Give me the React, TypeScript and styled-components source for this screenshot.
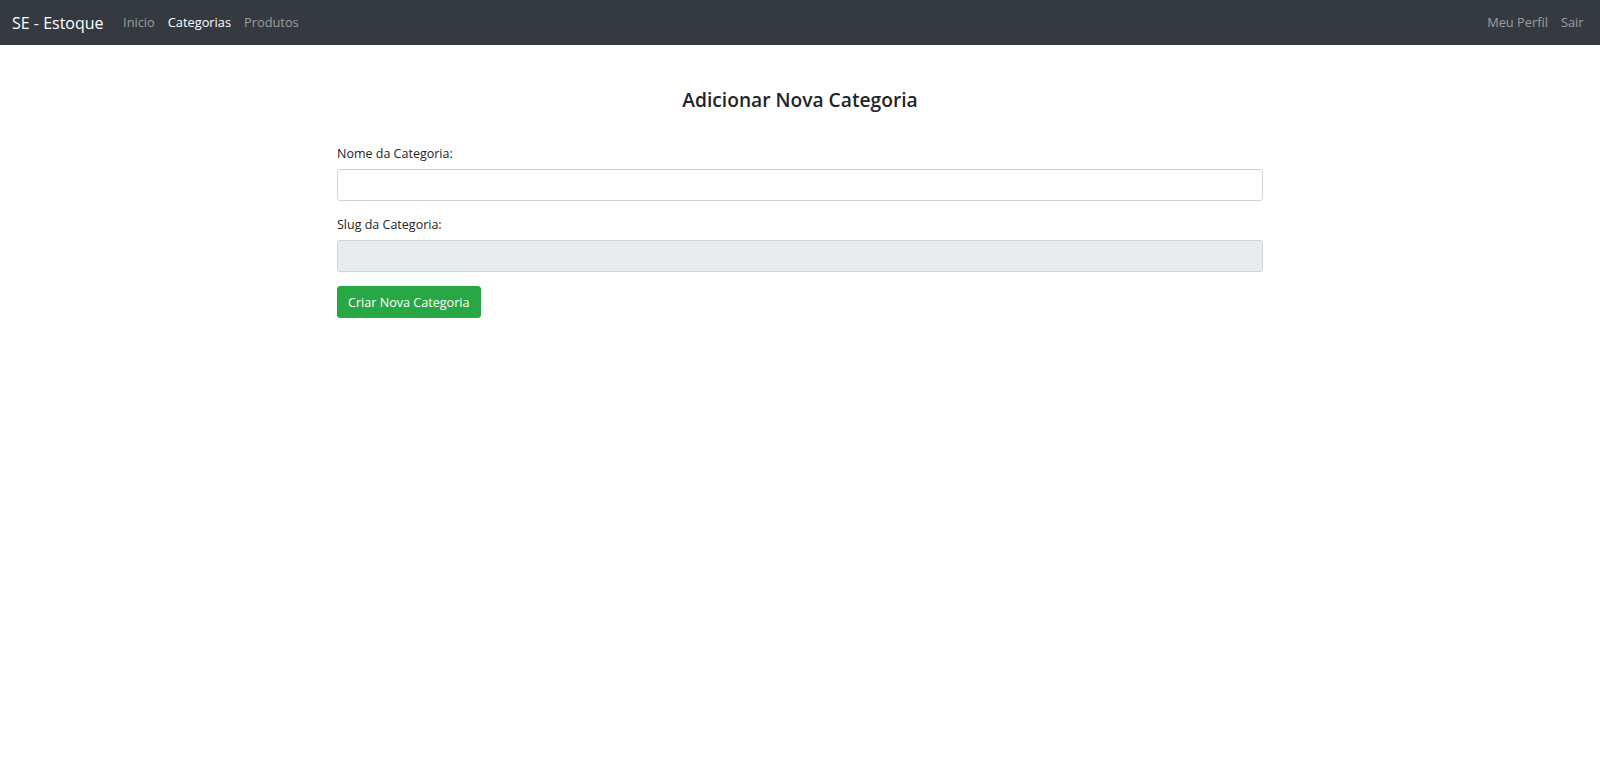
import React from "react";
import styled, { createGlobalStyle } from "styled-components";

const Global = createGlobalStyle`
  html, body { margin: 0; padding: 0; background: #fff; }
  body {
    font-family: "Open Sans", "Noto Sans", sans-serif;
    font-size: 12.8px;
    line-height: 1.5;
    color: #212529;
  }
  * { box-sizing: border-box; }
`;

const Navbar = styled.nav`
  height: 45px;
  background: #343a40;
  display: flex;
  align-items: center;
  padding: 0 10px 0 12px;
`;

const Brand = styled.a`
  color: #fff;
  font-size: 16px;
  margin-right: 13px;
  text-decoration: none;
  white-space: nowrap;
`;

const NavList = styled.div`
  display: flex;
  align-items: center;
`;

const NavLink = styled.a<{ $active?: boolean }>`
  color: ${(p) => (p.$active ? "#fff" : "rgba(255,255,255,0.5)")};
  font-size: 12.8px;
  padding: 0 6.5px;
  text-decoration: none;
  white-space: nowrap;
`;

const Spacer = styled.div`
  flex: 1;
`;

const Main = styled.main`
  width: 926px;
  margin: 0 auto;
  padding-top: 43px;
`;

const Title = styled.h4`
  margin: 0 0 33px;
  text-align: center;
  font-size: 19.2px;
  font-weight: 600;
  line-height: 1.2;
  color: #212529;
`;

const FormGroup = styled.div`
  margin-bottom: 14px;
`;

const Label = styled.label`
  display: block;
  margin-bottom: 6px;
  font-size: 12.5px;
  line-height: 19px;
`;

const Input = styled.input<{ $disabled?: boolean }>`
  display: block;
  width: 100%;
  height: 32px;
  padding: 5px 10px;
  font-size: 12.8px;
  font-family: inherit;
  color: #495057;
  background: ${(p) => (p.$disabled ? "#e9ecef" : "#fff")};
  border: 1px solid #ced4da;
  border-radius: 3px;
  outline: none;
`;

const Button = styled.button`
  display: inline-block;
  height: 32px;
  padding: 0 10px;
  font-family: inherit;
  font-size: 12.6px;
  color: #fff;
  background: #28a745;
  border: 1px solid #28a745;
  border-radius: 3px;
  cursor: pointer;
`;

export default function App() {
  return (
    <>
      <Global />
      <Navbar>
        <Brand href="#">SE - Estoque</Brand>
        <NavList>
          <NavLink href="#">Inicio</NavLink>
          <NavLink href="#" $active>Categorias</NavLink>
          <NavLink href="#">Produtos</NavLink>
        </NavList>
        <Spacer />
        <NavList>
          <NavLink href="#">Meu Perfil</NavLink>
          <NavLink href="#">Sair</NavLink>
        </NavList>
      </Navbar>
      <Main>
        <Title>Adicionar Nova Categoria</Title>
        <form onSubmit={(e) => e.preventDefault()}>
          <FormGroup>
            <Label>Nome da Categoria:</Label>
            <Input type="text" />
          </FormGroup>
          <FormGroup>
            <Label>Slug da Categoria:</Label>
            <Input type="text" $disabled readOnly />
          </FormGroup>
          <Button type="submit">Criar Nova Categoria</Button>
        </form>
      </Main>
    </>
  );
}
